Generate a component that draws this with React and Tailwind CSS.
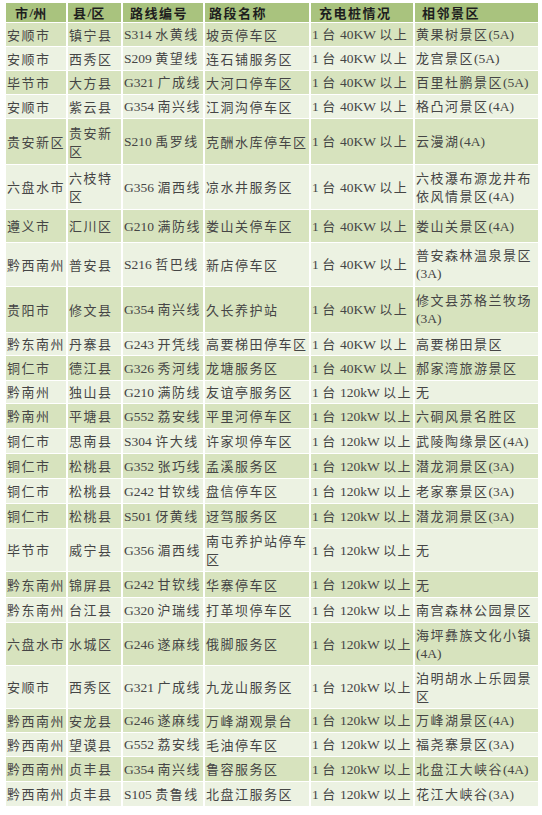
import React from "react";

const rows = [
  ["安顺市", "镇宁县", "S314 水黄线", "坡贡停车区", "1 台 40KW 以上", "黄果树景区(5A)", "h-[23px]"],
  ["安顺市", "西秀区", "S209 黄望线", "连石铺服务区", "1 台 40KW 以上", "龙宫景区(5A)", "h-[23px]"],
  ["毕节市", "大方县", "G321 广成线", "大河口停车区", "1 台 40KW 以上", "百里杜鹏景区(5A)", "h-[23px]"],
  ["安顺市", "紫云县", "G354 南兴线", "江洞沟停车区", "1 台 40KW 以上", "格凸河景区(4A)", "h-[23px]"],
  ["贵安新区", "贵安新\n区", "S210 禹罗线", "克酬水库停车区", "1 台 40KW 以上", "云漫湖(4A)", "h-[45px]"],
  ["六盘水市", "六枝特\n区", "G356 湄西线", "凉水井服务区", "1 台 40KW 以上", "六枝瀑布源龙井布\n依风情景区(4A)", "h-[44px]"],
  ["遵义市", "汇川区", "G210 满防线", "娄山关停车区", "1 台 40KW 以上", "娄山关景区(4A)", "h-[32px]"],
  ["黔西南州", "普安县", "S216 哲巴线", "新店停车区", "1 台 40KW 以上", "普安森林温泉景区\n(3A)", "h-[43px]"],
  ["贵阳市", "修文县", "G354 南兴线", "久长养护站", "1 台 40KW 以上", "修文县苏格兰牧场\n(3A)", "h-[45px]"],
  ["黔东南州", "丹寨县", "G243 开凭线", "高要梯田停车区", "1 台 40KW 以上", "高要梯田景区", "h-[22px]"],
  ["铜仁市", "德江县", "G326 秀河线", "龙塘服务区", "1 台 40KW 以上", "郝家湾旅游景区", "h-[24px]"],
  ["黔南州", "独山县", "G210 满防线", "友谊亭服务区", "1 台 120kW 以上", "无", "h-[22px]"],
  ["黔南州", "平塘县", "G552 荔安线", "平里河停车区", "1 台 120kW 以上", "六硐风景名胜区", "h-[24px]"],
  ["铜仁市", "思南县", "S304 许大线", "许家坝停车区", "1 台 120kW 以上", "武陵陶缘景区(4A)", "h-[24px]"],
  ["铜仁市", "松桃县", "G352 张巧线", "孟溪服务区", "1 台 120kW 以上", "潜龙洞景区(3A)", "h-[24px]"],
  ["铜仁市", "松桃县", "G242 甘钦线", "盘信停车区", "1 台 120kW 以上", "老家寨景区(3A)", "h-[24px]"],
  ["铜仁市", "松桃县", "S501 伢黄线", "迓驾服务区", "1 台 120kW 以上", "潜龙洞景区(3A)", "h-[24px]"],
  ["毕节市", "威宁县", "G356 湄西线", "南屯养护站停车\n区", "1 台 120kW 以上", "无", "h-[42px]"],
  ["黔东南州", "锦屏县", "G242 甘钦线", "华寨停车区", "1 台 120kW 以上", "无", "h-[25px]"],
  ["黔东南州", "台江县", "G320 沪瑞线", "打革坝停车区", "1 台 120kW 以上", "南宫森林公园景区", "h-[24px]"],
  ["六盘水市", "水城区", "G246 遂麻线", "俄脚服务区", "1 台 120kW 以上", "海坪彝族文化小镇\n(4A)", "h-[42px]"],
  ["安顺市", "西秀区", "G321 广成线", "九龙山服务区", "1 台 120kW 以上", "泊明胡水上乐园景\n区", "h-[42px]"],
  ["黔西南州", "安龙县", "G246 遂麻线", "万峰湖观景台", "1 台 120kW 以上", "万峰湖景区(4A)", "h-[23px]"],
  ["黔西南州", "望谟县", "G552 荔安线", "毛油停车区", "1 台 120kW 以上", "福尧寨景区(3A)", "h-[23px]"],
  ["黔西南州", "贞丰县", "G354 南兴线", "鲁容服务区", "1 台 120kW 以上", "北盘江大峡谷(4A)", "h-[24px]"],
  ["黔西南州", "贞丰县", "S105 贵鲁线", "北盘江服务区", "1 台 120kW 以上", "花江大峡谷(3A)", "h-[24px]"],
];

const headers = [
  ["市/州", "pl-[9px]"],
  ["县/区", "pl-[5px]"],
  ["路线编号", "pl-[7px]"],
  ["路段名称", "pl-[4px]"],
  ["充电桩情况", "pl-[8px]"],
  ["相邻景区", "pl-[7px]"],
];

function Runs({ text }) {
  const parts = text.split(/([\u0000-\u00ff]+)/).filter((p) => p.length > 0);
  return parts.map((p, i) =>
    /^[\u0000-\u00ff]+$/.test(p) ? (
      <span key={i} className="font-['Liberation_Serif',serif] text-[13.5px] tracking-normal">
        {p}
      </span>
    ) : (
      <span key={i} className="font-['Noto_Sans_CJK_SC',sans-serif] tracking-[1.5px]">
        {p}
      </span>
    )
  );
}

function Cell({ text, bg, h }) {
  const lines = text.split("\n");
  return (
    <div className={`${bg} ${h} flex flex-col justify-center pl-[1px] whitespace-pre text-[13px] leading-[18px] text-[#454545]`}>
      {lines.map((l, i) => (
        <div key={i}>
          <Runs text={l} />
        </div>
      ))}
    </div>
  );
}

export default function App() {
  return (
    <div className="bg-white w-[542px] min-h-[815px] pt-[3px] pl-[6px]">
      <div className="grid grid-cols-[60px_53px_80px_104px_102px_123px] gap-x-[2px] gap-y-[1px] bg-white">
        {headers.map(([t, pl], i) => (
          <div
            key={i}
            className={`bg-[#a9c37e] h-[19px] flex items-center ${pl} whitespace-pre text-[13px] leading-[18px] font-bold text-[#1e1e1e]`}
          >
            <Runs text={t} />
          </div>
        ))}
        {rows.map((r, ri) => {
          const bg = ri % 2 === 0 ? "bg-[#d7e3be]" : "bg-[#ecf2e2]";
          return r.slice(0, 6).map((c, ci) => <Cell key={ri + "-" + ci} text={c} bg={bg} h={r[6]} />);
        })}
      </div>
    </div>
  );
}
